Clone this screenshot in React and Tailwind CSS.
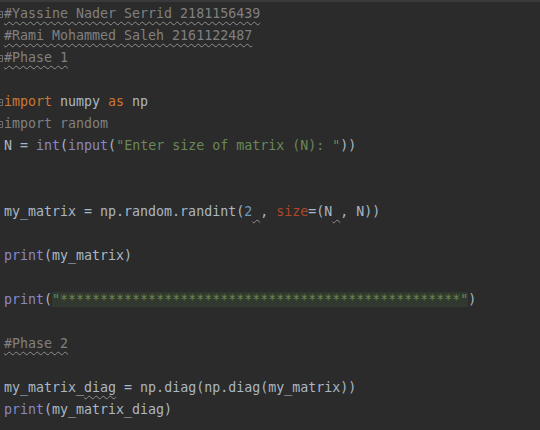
const C = {
  txt: "text-[#a9b7c6]",
  kw: "text-[#cc7832]",
  cm: "text-[#808080]",
  str: "text-[#6a8759]",
  num: "text-[#6897bb]",
  bi: "text-[#8888c6]",
  arg: "text-[#aa4926]",
};

function Fold() {
  return (
    <svg width="4" height="22" viewBox="0 0 4 22" className="block">
      <path d="M-3 8.5 H2.5 V14.5 H-3" fill="none" stroke="#6e6e6e" strokeWidth="1" />
      <path d="M-1 11.5 H1.5" stroke="#6e6e6e" strokeWidth="1" />
    </svg>
  );
}

function Line({ fold, children }) {
  return (
    <div className="flex h-[22px] items-center whitespace-pre">
      <div className="w-[4px] h-[22px] shrink-0">{fold && <Fold />}</div>
      <div>{children}</div>
    </div>
  );
}

const wavy = "underline decoration-wavy decoration-[#8f8f8f] decoration-1 underline-offset-[3px]";
const stars = "*".repeat(50);

export default function App() {
  return (
    <div
      className="w-[540px] h-[430px] overflow-hidden bg-[#2b2b2b] border-t-2 border-[#3a3a3a] pt-px text-[13.3px] leading-[22px] text-[#a9b7c6]"
      style={{ fontFamily: '"DejaVu Sans Mono", "Liberation Mono", monospace' }}
    >
      <Line fold>
        <span className={`${C.cm} ${wavy}`}>#Yassine Nader Serrid 2181156439</span>
      </Line>
      <Line>
        <span className={`${C.cm} ${wavy}`}>#Rami Mohammed Saleh 2161122487</span>
      </Line>
      <Line fold>
        <span className={`${C.cm} ${wavy}`}>#Phase 1</span>
      </Line>
      <Line />
      <Line fold>
        <span className={C.kw}>import</span> numpy <span className={C.kw}>as</span> np
      </Line>
      <Line fold>
        <span className={C.cm}>import random</span>
      </Line>
      <Line>
        N = <span className={C.bi}>int</span>(<span className={C.bi}>input</span>(
        <span className={C.str}>"Enter size of matrix (N): "</span>))
      </Line>
      <Line />
      <Line />
      <Line>
        my_matrix = np.random.randint(<span className={C.num}>2</span>
        <span className={wavy}> </span>, <span className={C.arg}>size</span>=(N
        <span className={wavy}> </span>, N))
      </Line>
      <Line />
      <Line>
        <span className={C.bi}>print</span>(my_matrix)
      </Line>
      <Line />
      <Line>
        <span className={C.bi}>print</span>(
        <span className={`${C.str} bg-[#313830]`}>"{stars}"</span>)
      </Line>
      <Line />
      <Line>
        <span className={`${C.cm} ${wavy}`}>#Phase 2</span>
      </Line>
      <Line />
      <Line>
        my_matrix_<span className={wavy}>diag</span> = np.diag(np.diag(my_matrix))
      </Line>
      <Line>
        <span className={C.bi}>print</span>(my_matrix_diag)
      </Line>
    </div>
  );
}
